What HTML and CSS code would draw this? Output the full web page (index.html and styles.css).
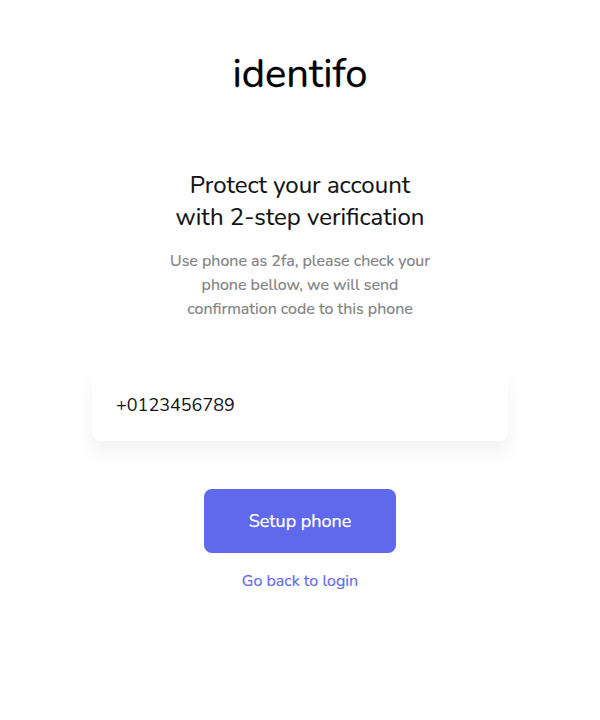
FILE: index.html
```html
<!DOCTYPE html>
<html lang="en">
<head>
<meta charset="utf-8">
<title>identifo</title>
<link rel="stylesheet" href="styles.css">
</head>
<body>
<main class="page">
<h1 class="logo">identifo</h1>
<h2 class="title">Protect your account<br>with 2-step verification</h2>
<p class="description">Use phone as 2fa, please check your<br>phone bellow, we will send<br>confirmation code to this phone</p>
<div class="card"><span class="phone">+0123456789</span></div>
<button class="button" type="button">Setup phone</button>
<a class="back" href="#">Go back to login</a>
</main>
</body>
</html>
```
FILE: styles.css
```css
* { box-sizing: border-box; }
body { margin: 0; background: #fff; font-family: Nunito, Lato, "Open Sans", sans-serif; color: #111213; }
.page { height: 720px; display: flex; flex-direction: column; align-items: center; padding-top: 46px; }
h1, h2, p { margin: 0; font-weight: 400; text-align: center; white-space: nowrap; }
.logo { font-size: 40px; line-height: 56px; color: #000; -webkit-text-stroke: 0.3px #000; }
.title { margin-top: 67px; font-size: 24px; line-height: 32px; -webkit-text-stroke: 0.15px #111213; }
.description { margin-top: 16px; font-size: 16px; line-height: 24px; color: #828282; -webkit-text-stroke: 0.2px #828282; }
.card { margin-top: 48px; width: 416px; height: 72px; flex: none; border-radius: 8px; padding: 0 24px; display: flex; align-items: center; background: #fff; box-shadow: 0 11px 20px rgba(0,0,0,.055); font-size: 18px; line-height: 26px; clip-path: inset(0 -8px -24px -8px); }
.button { margin-top: 48px; width: 192px; height: 64px; flex: none; border: 0; border-radius: 8px; background: #6069eb; color: #fff; font: 400 18px/26px Nunito, Lato, sans-serif; -webkit-text-stroke: 0.25px #fff; }
.back { margin-top: 16px; font-size: 16px; line-height: 24px; color: #6069eb; text-decoration: none; -webkit-text-stroke: 0.15px #6069eb; }
```
